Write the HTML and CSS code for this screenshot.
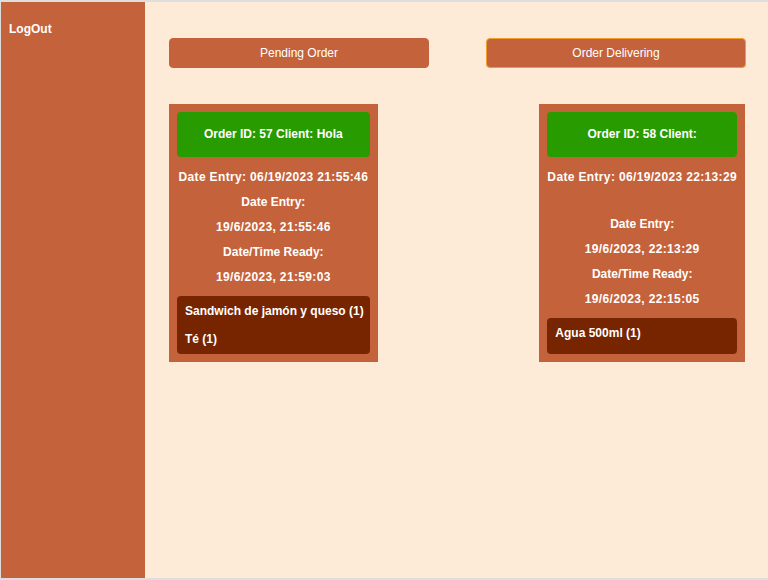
FILE: index.html
```html
<!DOCTYPE html>
<html lang="es">
<head>
<meta charset="utf-8">
<title>Orders</title>
<link rel="stylesheet" href="styles.css">
</head>
<body>
<div class="app">
  <aside class="sidebar">
    <div class="logout">LogOut</div>
  </aside>
  <main class="main">
    <div class="tabs">
      <button class="tab">Pending Order</button>
      <button class="tab tab-active">Order Delivering</button>
    </div>
    <div class="orders">
      <div class="card">
        <div class="card-head">Order ID: 57 Client: Hola</div>
        <div class="line date">Date Entry: 06/19/2023 21:55:46</div>
        <div class="line">Date Entry:</div>
        <div class="line date">19/6/2023, 21:55:46</div>
        <div class="line">Date/Time Ready:</div>
        <div class="line date">19/6/2023, 21:59:03</div>
        <div class="items">
          <div class="item">Sandwich de jamón y queso (1)</div>
          <div class="item">Té (1)</div>
        </div>
      </div>
      <div class="card">
        <div class="card-head">Order ID: 58 Client:</div>
        <div class="line date">Date Entry: 06/19/2023 22:13:29</div>
        <div class="spacer"></div>
        <div class="line">Date Entry:</div>
        <div class="line date">19/6/2023, 22:13:29</div>
        <div class="line">Date/Time Ready:</div>
        <div class="line date">19/6/2023, 22:15:05</div>
        <div class="items">
          <div class="item">Agua 500ml (1)</div>
        </div>
      </div>
    </div>
  </main>
</div>
</body>
</html>
```

FILE: styles.css
```css
* { box-sizing: border-box; }

html, body {
  margin: 0;
  padding: 0;
}

body {
  font-family: "Liberation Sans", Arial, sans-serif;
  color: #ffffff;
  background: #ffffff;
}

.app {
  display: flex;
  width: 768px;
  height: 580px;
  border: 0 solid #dedede;
  border-top-width: 2px;
  border-bottom-width: 2px;
  border-left-width: 1px;
  background: #fdebd7;
}

.sidebar {
  width: 144px;
  flex: none;
  background: #c4623b;
  padding: 19px 8px;
}

.logout {
  font-size: 12px;
  font-weight: bold;
  line-height: 16px;
}

.main {
  flex: 1;
  padding: 36px 22px 0 24px;
}

.tabs {
  display: grid;
  grid-template-columns: 1fr 1fr;
  column-gap: 57px;
}

.tab {
  height: 30px;
  background: #c4623b;
  border: 1px solid #c4623b;
  border-radius: 4px;
  color: #ffffff;
  font-family: "Liberation Sans", Arial, sans-serif;
  font-size: 12px;
  padding: 0;
}

.tab-active {
  border-color: #f09d2c;
}

.orders {
  display: flex;
  justify-content: space-between;
  align-items: stretch;
  margin-top: 36px;
  padding-right: 1px;
}

.card {
  display: flex;
  flex-direction: column;
  background: #c4623b;
  padding: 8px;
  font-size: 12px;
  font-weight: bold;
}

.card-head {
  background: #279b00;
  border-radius: 4px;
  padding: 15px 8px;
  line-height: 15px;
  text-align: center;
  margin-bottom: 8px;
}

.line {
  line-height: 25px;
  text-align: center;
  white-space: nowrap;
}

.date {
  letter-spacing: 0.35px;
}

.spacer {
  height: 22px;
}

.items {
  flex-grow: 1;
  margin-top: 6px;
  background: #762500;
  border-radius: 4px;
  padding: 7px 6px 7px 8px;
  display: flex;
  flex-direction: column;
  gap: 12px;
}

.item {
  line-height: 16px;
  white-space: nowrap;
}
```
